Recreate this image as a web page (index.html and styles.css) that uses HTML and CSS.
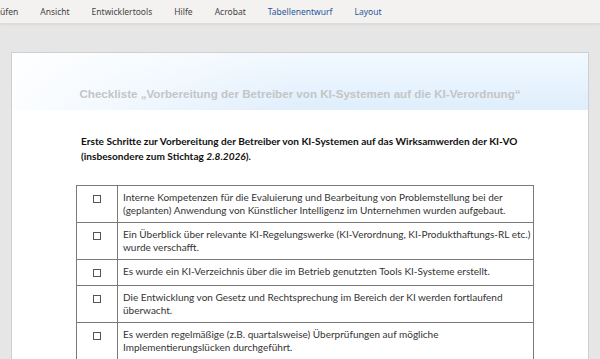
FILE: index.html
```html
<!DOCTYPE html>
<html lang="de">
<head>
    <meta charset="UTF-8">
    <meta name="viewport" content="width=device-width, initial-scale=1.0">
    <title>Checkliste KI-Verordnung</title>
    <link rel="stylesheet" href="styles.css">
</head>
<body>
    <div class="ribbon">
        <span class="tab">üfen</span>
        <span class="tab">Ansicht</span>
        <span class="tab">Entwicklertools</span>
        <span class="tab">Hilfe</span>
        <span class="tab">Acrobat</span>
        <span class="tab context">Tabellenentwurf</span>
        <span class="tab context">Layout</span>
    </div>
    <div class="workspace">
        <div class="page">
            <div class="page-header">
                <h1>Checkliste „Vorbereitung der Betreiber von KI-Systemen auf die KI-Verordnung“</h1>
            </div>
            <div class="page-body">
                <p class="intro">Erste Schritte zur Vorbereitung der Betreiber von KI-Systemen auf das Wirksamwerden der KI-VO<br>(insbesondere zum Stichtag <em>2.8.2026</em>).</p>
                <table class="checklist">
                    <tr>
                        <td class="box"><span class="check"></span></td>
                        <td>Interne Kompetenzen für die Evaluierung und Bearbeitung von Problemstellung bei der (geplanten) Anwendung von Künstlicher Intelligenz im Unternehmen wurden aufgebaut.</td>
                    </tr>
                    <tr>
                        <td class="box"><span class="check"></span></td>
                        <td>Ein Überblick über relevante KI-Regelungswerke (KI-Verordnung, KI-Produkthaftungs-RL etc.) wurde verschafft.</td>
                    </tr>
                    <tr>
                        <td class="box"><span class="check"></span></td>
                        <td>Es wurde ein KI-Verzeichnis über die im Betrieb genutzten Tools KI-Systeme erstellt.</td>
                    </tr>
                    <tr>
                        <td class="box"><span class="check"></span></td>
                        <td>Die Entwicklung von Gesetz und Rechtsprechung im Bereich der KI werden fortlaufend überwacht.</td>
                    </tr>
                    <tr>
                        <td class="box"><span class="check"></span></td>
                        <td>Es werden regelmäßige (z.B. quartalsweise) Überprüfungen auf mögliche Implementierungslücken durchgeführt.</td>
                    </tr>
                </table>
            </div>
        </div>
    </div>
</body>
</html>
```

FILE: styles.css
```css
body, html {
    margin: 0;
    padding: 0;
    height: 100%;
    overflow: hidden;
    background-color: #e6e6e6;
}
.ribbon {
    display: flex;
    gap: 22px;
    height: 23px;
    align-items: center;
    background-color: #f3f2f1;
    border-bottom: 1px solid #dcdcdc;
    box-shadow: 0 1px 2px rgba(0, 0, 0, 0.06);
    font-family: "Noto Sans", sans-serif;
    font-size: 8.5px;
    color: #444;
}
.ribbon .context {
    color: #2b579a;
}
.workspace {
    padding: 28px 11px 0 11px;
}
.page {
    background-color: #fff;
    border: 1px solid #cfcfcf;
    border-bottom: none;
    height: 320px;
}
.page-header {
    height: 57px;
    display: flex;
    align-items: flex-end;
    justify-content: center;
    background:
        linear-gradient(to right, rgba(255, 255, 255, 0.9), rgba(255, 255, 255, 0) 50%),
        linear-gradient(to bottom, #f2f9ff, #dfeefc);
}
.page-header h1 {
    margin: 0 0 10px 0;
    font-family: "Liberation Sans", Arial, sans-serif;
    font-size: 11.6px;
    font-weight: bold;
    color: #c3c5c7;
}
.page-body {
    padding: 24px 0 0 64px;
}
.intro {
    margin: 0 0 21px 5px;
    font-family: Lato, sans-serif;
    font-size: 10.1px;
    font-weight: bold;
    line-height: 15px;
    color: #111;
}
.intro em {
    font-weight: bold;
}
.checklist {
    width: 458px;
    border-collapse: collapse;
    font-family: Lato, sans-serif;
    font-size: 10px;
    line-height: 13px;
    color: #333;
}
.checklist td {
    border: 1px solid #7a7a7a;
    padding: 5px 2px 5px 5px;
    vertical-align: top;
}
.checklist .box {
    width: 40px;
    padding: 5px 0;
    text-align: center;
}
.check {
    display: inline-block;
    width: 6px;
    height: 6px;
    margin-top: 4px;
    border: 1px solid #555;
}
```
